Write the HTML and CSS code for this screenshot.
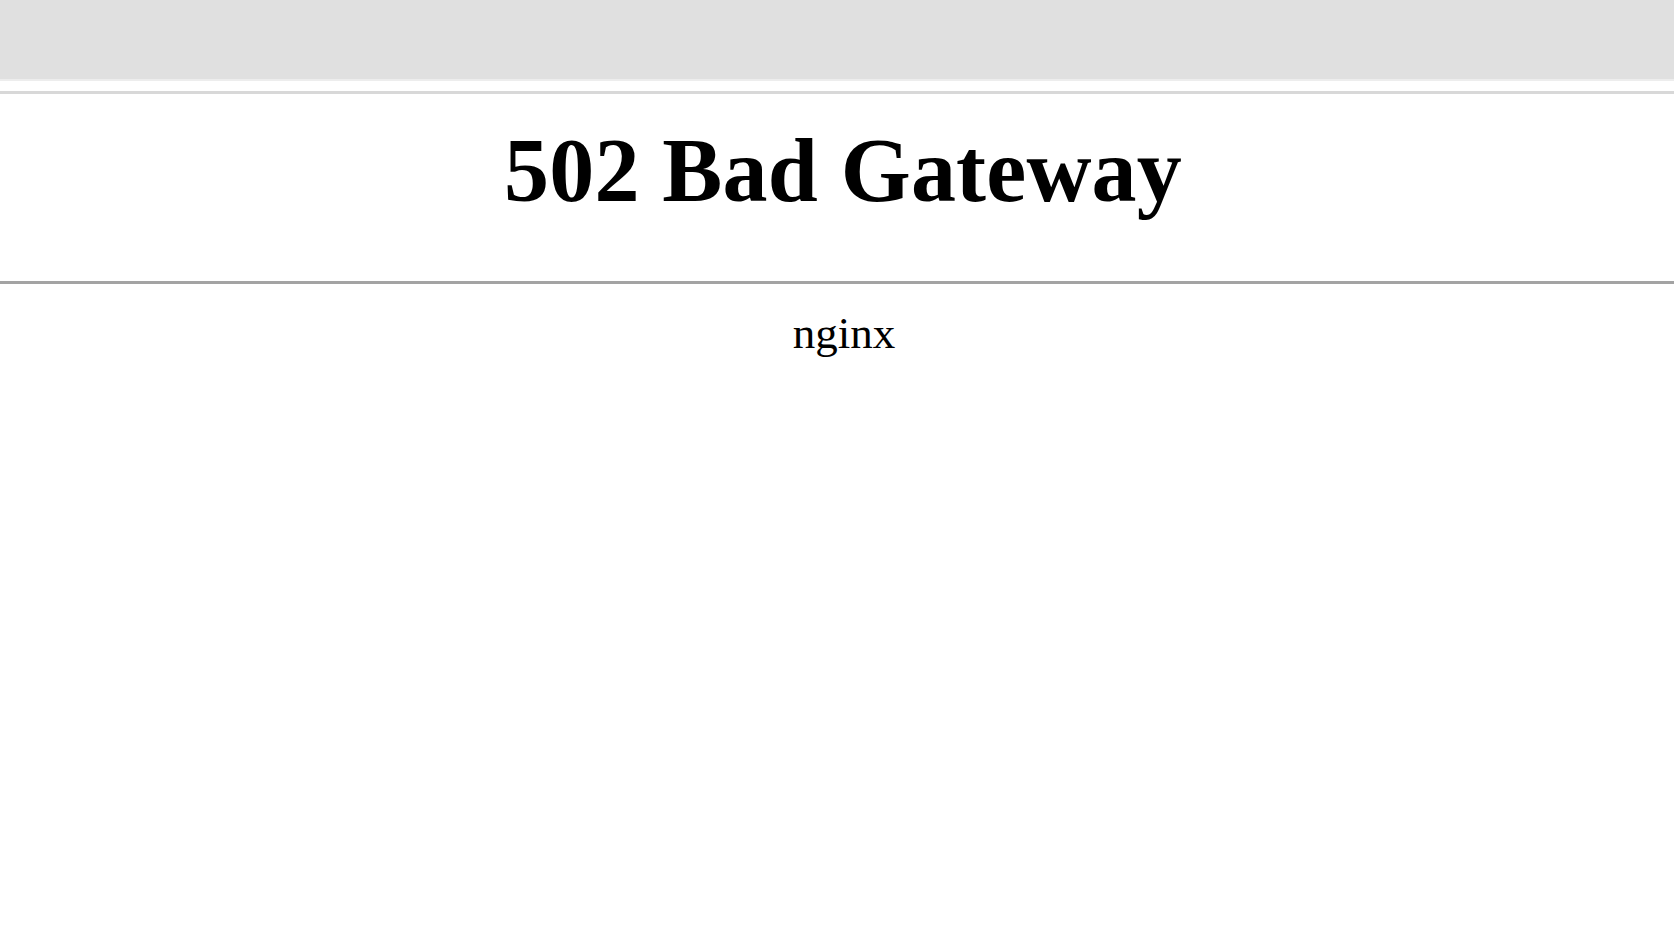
FILE: index.html
```html
<!DOCTYPE html>
<html lang="en">
<head>
    <meta charset="UTF-8">
    <meta name="viewport" content="width=device-width, initial-scale=1.0">
    <title>502 Bad Gateway</title>
    <link rel="stylesheet" href="styles.css">
</head>
<body>
    <div class="topbar"></div>
    <div class="topbar-rule"></div>
    <h1 class="title">502 Bad Gateway</h1>
    <hr class="divider">
    <p class="server">nginx</p>
</body>
</html>
```

FILE: styles.css
```css
body {
    margin: 0;
    background: #fff;
    color: #000;
    font-family: "Liberation Serif", "Times New Roman", serif;
}

.topbar {
    height: 79px;
    background: #e0e0e0;
    border-bottom: 2px solid #ededed;
}

.topbar-rule {
    margin-top: 10px;
    height: 3px;
    background: #d8d8d8;
}

.title {
    margin: 27px 0 0;
    padding-left: 12px;
    font-size: 90px;
    line-height: 100px;
    font-weight: bold;
    letter-spacing: 0.2px;
    text-align: center;
}

.divider {
    margin: 60px 0 0;
    height: 3px;
    border: 0;
    background: #a3a3a3;
}

.server {
    margin: 24px 0 0;
    padding-left: 14px;
    font-size: 45px;
    line-height: 50px;
    text-align: center;
}
```
